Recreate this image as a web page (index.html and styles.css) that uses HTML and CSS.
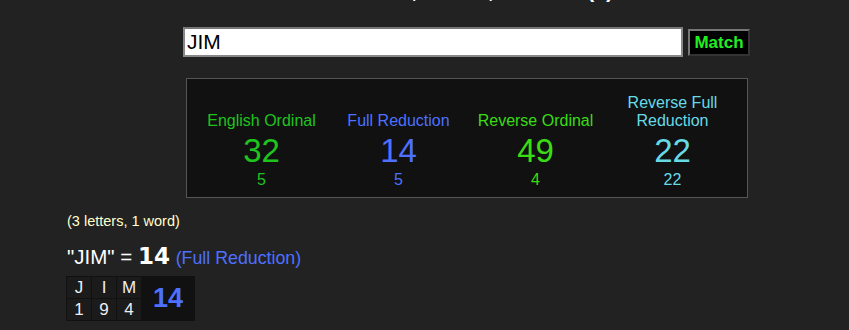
FILE: index.html
```html
<!DOCTYPE html>
<html lang="en">
<head>
    <meta charset="UTF-8">
    <title>Gematria - JIM</title>
    <link rel="stylesheet" href="styles.css">
</head>
<body>
    <div class="page">
        <h1 class="title">Jim in Gematria, Words, Phrases (0)</h1>

        <form class="search">
            <input class="search-input" type="text" value="JIM">
            <button class="search-btn" type="button">Match</button>
        </form>

        <div class="results">
            <table class="ciphers">
                <tr class="labels">
                    <td class="c-eo">English Ordinal</td>
                    <td class="c-fr">Full Reduction</td>
                    <td class="c-ro">Reverse Ordinal</td>
                    <td class="c-rfr">Reverse Full<br>Reduction</td>
                </tr>
                <tr class="totals">
                    <td class="c-eo">32</td>
                    <td class="c-fr">14</td>
                    <td class="c-ro">49</td>
                    <td class="c-rfr">22</td>
                </tr>
                <tr class="reduced">
                    <td class="c-eo">5</td>
                    <td class="c-fr">5</td>
                    <td class="c-ro">4</td>
                    <td class="c-rfr">22</td>
                </tr>
            </table>
        </div>

        <p class="count">(3 letters, 1 word)</p>

        <p class="phrase">"JIM" = <b class="phrase-num">14</b> <span class="phrase-cipher c-fr">(Full Reduction)</span></p>

        <table class="breakdown">
            <tr>
                <td class="letter">J</td>
                <td class="letter">I</td>
                <td class="letter">M</td>
                <td class="sum" rowspan="2">14</td>
            </tr>
            <tr>
                <td class="val">1</td>
                <td class="val">9</td>
                <td class="val">4</td>
            </tr>
        </table>
    </div>
</body>
</html>
```

FILE: styles.css
```css
body {
    margin: 0;
    background: #222222;
    color: #ffffff;
    font-family: 'Liberation Sans', Arial, sans-serif;
    overflow: hidden;
}

.page {
    width: 849px;
    height: 330px;
    overflow: hidden;
}

/* Titelzeile liegt fast ganz oberhalb des Fensters */
.title {
    margin: -21px 0 0 0;
    height: 24px;
    font-size: 21px;
    line-height: 24px;
    text-align: right;
    padding-right: 236px;
    color: #ffffff;
}

.search {
    display: flex;
    align-items: flex-start;
    margin: 24px 0 0 183px;
    gap: 5px;
}

.search-input {
    width: 500px;
    height: 30px;
    box-sizing: border-box;
    border: 2px solid #888;
    border-top-color: #777;
    padding: 0 2px;
    font-family: 'Liberation Sans', Arial, sans-serif;
    font-size: 21px;
    color: #000;
    background: #fff;
    outline: none;
}

.search-btn {
    height: 27px;
    width: 62px;
    margin-top: 2px;
    padding: 0;
    background: #000;
    color: #22ee22;
    border: 2px solid #777;
    border-right-color: #333;
    border-bottom-color: #333;
    font-family: 'Liberation Sans', Arial, sans-serif;
    font-weight: bold;
    font-size: 17px;
}

.results {
    margin: 21px 0 0 186px;
    width: 560px;
    height: 118px;
    border: 1px solid #555;
    background: #111111;
}

.ciphers {
    width: 548px;
    margin: 15px 6px 0;
    table-layout: fixed;
    border-collapse: collapse;
    text-align: center;
}

.ciphers td {
    padding: 0;
}

.labels td {
    vertical-align: bottom;
    font-size: 16px;
    line-height: 18px;
}

.totals td {
    font-size: 33px;
    line-height: 36px;
    padding-top: 3px;
}

.reduced td {
    font-size: 16px;
    line-height: 18px;
    padding-top: 2px;
}

.c-eo { color: #1ec41e; }
.c-fr { color: #4d70ff; }
.c-ro { color: #39dd14; }
.c-rfr { color: #66dbe6; }

.count {
    margin: 15px 0 0 67px;
    font-size: 14.5px;
    line-height: 16px;
    color: #ffffcc;
}

.phrase {
    margin: 16px 0 0 67px;
    font-size: 20.5px;
    line-height: 22px;
}

.phrase-num {
    font-family: 'DejaVu Sans', sans-serif;
    font-weight: bold;
    font-size: 23px;
}

.phrase-cipher {
    font-size: 17.8px;
}

.breakdown {
    margin: 7px 0 0 66px;
    border-collapse: separate;
    border-spacing: 1px;
    background: #111111;
}

.breakdown td {
    text-align: center;
    background: #1b1b1b;
    color: #eeeef4;
    font-size: 17px;
    line-height: 21px;
    width: 24px;
    padding: 0;
}

.breakdown .sum {
    width: 52px;
    background: #111111;
    color: #4d70ff;
    font-weight: bold;
    font-size: 27px;
}
```
